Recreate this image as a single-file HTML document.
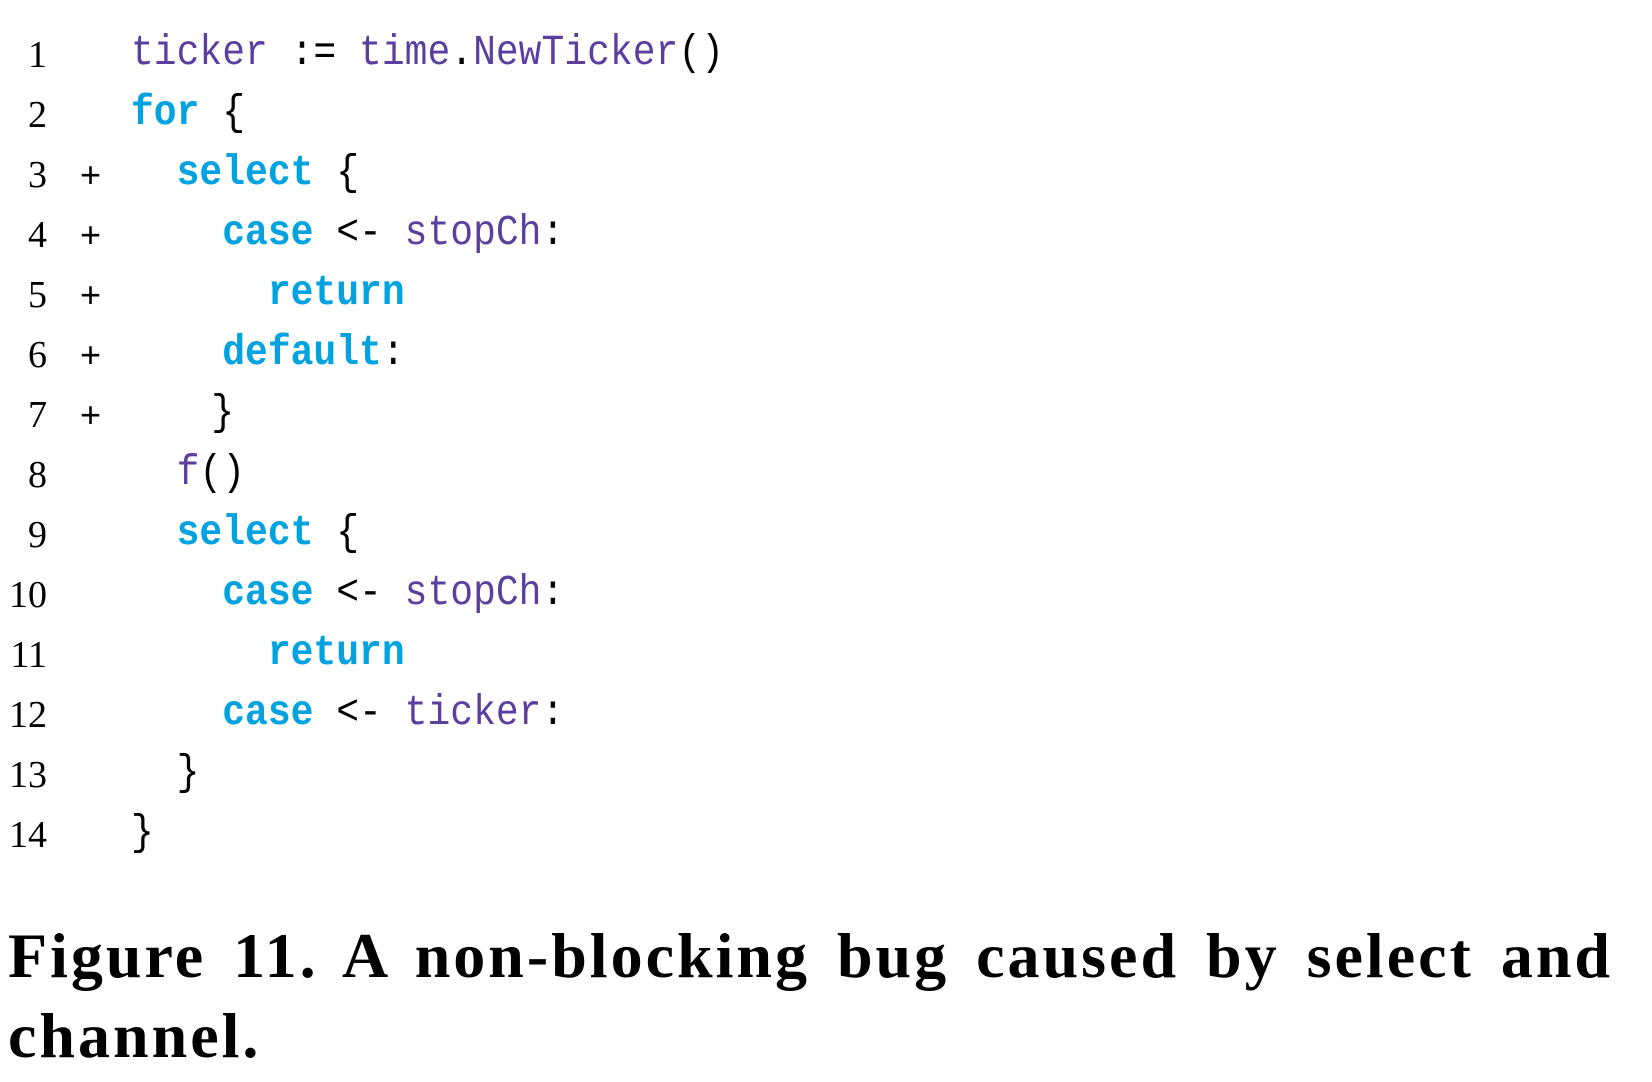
<!DOCTYPE html>
<html><head><meta charset="utf-8"><style>
html,body{margin:0;padding:0;background:#fff;width:1652px;height:1082px;overflow:hidden;position:relative}
.ln{position:absolute;left:0;width:47px;text-align:right;font-family:"Liberation Serif",serif;font-size:38px;line-height:60px;color:#000}
.pl{position:absolute;left:80px;font-family:"Liberation Sans",sans-serif;font-size:36px;line-height:60px;color:#000}
.cd{position:absolute;left:131px;font-family:"Liberation Mono",monospace;font-size:38px;line-height:60px;white-space:pre;color:#000;transform:scaleY(1.12);transform-origin:0 40px}
.k{color:#00a3e0;font-weight:bold}
.p{color:#5a3f9f}
.cap{position:absolute;left:8px;width:1605px;font-family:"Liberation Serif",serif;font-weight:bold;font-size:64px;line-height:80px;color:#000;white-space:nowrap;letter-spacing:3px}
.j{text-align:justify;text-align-last:justify}
</style></head><body>
<div class="ln" style="top:25px">1</div><div class="cd" style="top:25px"><span class="p">ticker</span> := <span class="p">time</span>.<span class="p">NewTicker</span>()</div>
<div class="ln" style="top:85px">2</div><div class="cd" style="top:85px"><span class="k">for</span> {</div>
<div class="ln" style="top:145px">3</div><div class="pl" style="top:145px">+</div><div class="cd" style="top:145px">  <span class="k">select</span> {</div>
<div class="ln" style="top:205px">4</div><div class="pl" style="top:205px">+</div><div class="cd" style="top:205px">    <span class="k">case</span> &lt;- <span class="p">stopCh</span>:</div>
<div class="ln" style="top:265px">5</div><div class="pl" style="top:265px">+</div><div class="cd" style="top:265px">      <span class="k">return</span></div>
<div class="ln" style="top:325px">6</div><div class="pl" style="top:325px">+</div><div class="cd" style="top:325px">    <span class="k">default</span>:</div>
<div class="ln" style="top:385px">7</div><div class="pl" style="top:385px">+</div><div class="cd" style="top:385px;left:120px">    }</div>
<div class="ln" style="top:445px">8</div><div class="cd" style="top:445px">  <span class="p">f</span>()</div>
<div class="ln" style="top:505px">9</div><div class="cd" style="top:505px">  <span class="k">select</span> {</div>
<div class="ln" style="top:565px">10</div><div class="cd" style="top:565px">    <span class="k">case</span> &lt;- <span class="p">stopCh</span>:</div>
<div class="ln" style="top:625px">11</div><div class="cd" style="top:625px">      <span class="k">return</span></div>
<div class="ln" style="top:685px">12</div><div class="cd" style="top:685px">    <span class="k">case</span> &lt;- <span class="p">ticker</span>:</div>
<div class="ln" style="top:745px">13</div><div class="cd" style="top:745px">  }</div>
<div class="ln" style="top:805px">14</div><div class="cd" style="top:805px">}</div>
<div class="cap j" style="top:916px;white-space:normal">Figure 11. A non-blocking bug caused by select and</div>
<div class="cap" style="top:996px">channel.</div>
</body></html>
